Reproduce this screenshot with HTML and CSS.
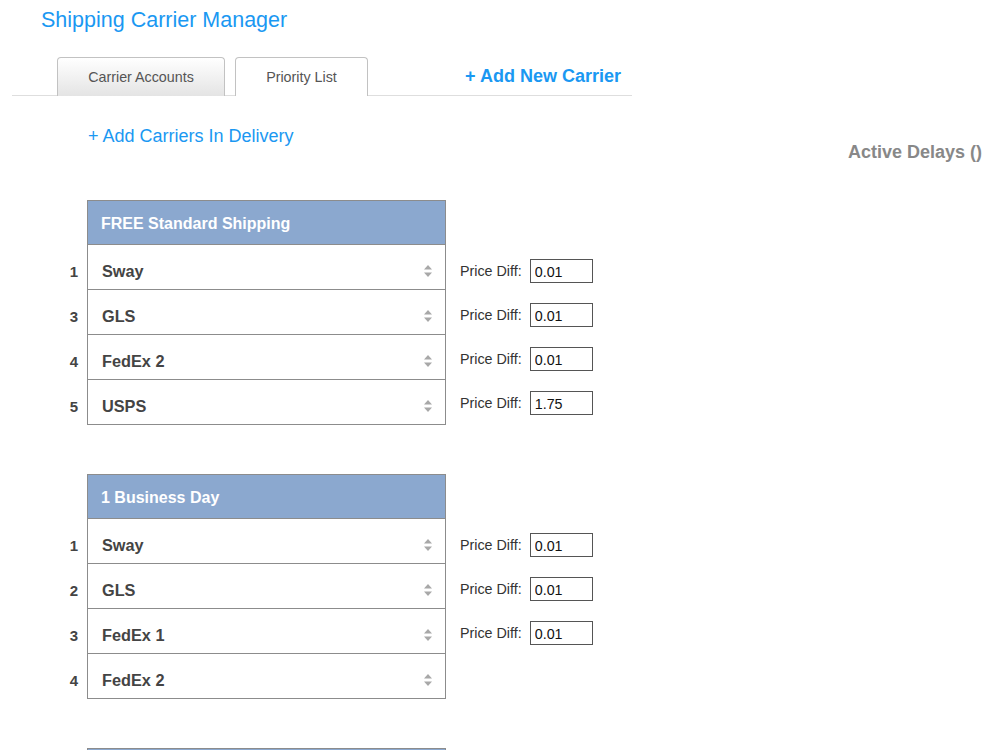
FILE: index.html
```html
<!DOCTYPE html>
<html lang="en">
<head>
    <meta charset="UTF-8">
    <title>Shipping Carrier Manager</title>
    <link rel="stylesheet" href="styles.css">
</head>
<body>
<h1 class="page-title">Shipping Carrier Manager</h1>

<div class="tab-bar">
    <div class="tab">Carrier Accounts</div>
    <div class="tab tab-active">Priority List</div>
    <a class="add-carrier" href="#">+ Add New Carrier</a>
</div>

<div class="content">
    <div class="main-col">
        <a class="add-delivery" href="#">+ Add Carriers In Delivery</a>

        <div class="group">
            <div class="rows">
                <div class="row">
                    <div class="num"></div>
                    <div class="cell cell-head">FREE Standard Shipping</div>
                </div>
                <div class="row">
                    <div class="num">1</div>
                    <div class="cell">Sway <svg class="sort" viewBox="0 0 10 14"><path d="M5 1 L9 5.5 L1 5.5 Z"/><path d="M1 8.5 L9 8.5 L5 13 Z"/></svg></div>
                </div>
                <div class="row">
                    <div class="num">3</div>
                    <div class="cell">GLS <svg class="sort" viewBox="0 0 10 14"><path d="M5 1 L9 5.5 L1 5.5 Z"/><path d="M1 8.5 L9 8.5 L5 13 Z"/></svg></div>
                </div>
                <div class="row">
                    <div class="num">4</div>
                    <div class="cell">FedEx 2 <svg class="sort" viewBox="0 0 10 14"><path d="M5 1 L9 5.5 L1 5.5 Z"/><path d="M1 8.5 L9 8.5 L5 13 Z"/></svg></div>
                </div>
                <div class="row">
                    <div class="num">5</div>
                    <div class="cell">USPS <svg class="sort" viewBox="0 0 10 14"><path d="M5 1 L9 5.5 L1 5.5 Z"/><path d="M1 8.5 L9 8.5 L5 13 Z"/></svg></div>
                </div>
            </div>
            <div class="prices">
                <label class="price">Price Diff: <input type="text" value="0.01"></label>
                <label class="price">Price Diff: <input type="text" value="0.01"></label>
                <label class="price">Price Diff: <input type="text" value="0.01"></label>
                <label class="price">Price Diff: <input type="text" value="1.75"></label>
            </div>
        </div>

        <div class="group">
            <div class="rows">
                <div class="row">
                    <div class="num"></div>
                    <div class="cell cell-head">1 Business Day</div>
                </div>
                <div class="row">
                    <div class="num">1</div>
                    <div class="cell">Sway <svg class="sort" viewBox="0 0 10 14"><path d="M5 1 L9 5.5 L1 5.5 Z"/><path d="M1 8.5 L9 8.5 L5 13 Z"/></svg></div>
                </div>
                <div class="row">
                    <div class="num">2</div>
                    <div class="cell">GLS <svg class="sort" viewBox="0 0 10 14"><path d="M5 1 L9 5.5 L1 5.5 Z"/><path d="M1 8.5 L9 8.5 L5 13 Z"/></svg></div>
                </div>
                <div class="row">
                    <div class="num">3</div>
                    <div class="cell">FedEx 1 <svg class="sort" viewBox="0 0 10 14"><path d="M5 1 L9 5.5 L1 5.5 Z"/><path d="M1 8.5 L9 8.5 L5 13 Z"/></svg></div>
                </div>
                <div class="row">
                    <div class="num">4</div>
                    <div class="cell">FedEx 2 <svg class="sort" viewBox="0 0 10 14"><path d="M5 1 L9 5.5 L1 5.5 Z"/><path d="M1 8.5 L9 8.5 L5 13 Z"/></svg></div>
                </div>
            </div>
            <div class="prices">
                <label class="price">Price Diff: <input type="text" value="0.01"></label>
                <label class="price">Price Diff: <input type="text" value="0.01"></label>
                <label class="price">Price Diff: <input type="text" value="0.01"></label>
            </div>
        </div>

        <div class="group">
            <div class="rows">
                <div class="row">
                    <div class="num"></div>
                    <div class="cell cell-head"></div>
                </div>
            </div>
        </div>
    </div>

    <div class="delays">Active Delays ()</div>
</div>
</body>
</html>
```

FILE: styles.css
```css
body {
    margin: 0;
    font-family: "Liberation Sans", Arial, sans-serif;
    color: #444;
    background: #fff;
}

a {
    text-decoration: none;
    color: #1a98f2;
}

.page-title {
    margin: 0;
    padding: 8px 0 0 41px;
    font-size: 21.5px;
    line-height: 25px;
    font-weight: normal;
    color: #1a98f2;
}

.tab-bar {
    display: flex;
    align-items: flex-end;
    width: 620px;
    height: 39px;
    margin: 24px 0 0 12px;
    padding-left: 45px;
    box-sizing: border-box;
    border-bottom: 1px solid #dedede;
}

.tab {
    height: 39px;
    box-sizing: border-box;
    margin-bottom: -1px;
    margin-right: 10px;
    padding-top: 11px;
    text-align: center;
    font-size: 14.3px;
    line-height: 17px;
    color: #555;
    border: 1px solid #c2c2c2;
    border-bottom: none;
    border-radius: 4px 4px 0 0;
    background: linear-gradient(#ffffff, #e4e4e4);
    width: 168px;
}

.tab-active {
    width: 133px;
    background: #fff;
}

.add-carrier {
    margin-left: auto;
    margin-right: 11px;
    align-self: center;
    font-size: 18px;
    font-weight: bold;
    line-height: 20px;
}

.content {
    display: flex;
    justify-content: space-between;
}

.main-col {
    padding-left: 55px;
}

.add-delivery {
    display: block;
    margin: 30px 0 0 33px;
    font-size: 18px;
    line-height: 20px;
}

.group {
    display: flex;
    margin-top: 49px;
}

.group:first-of-type {
    margin-top: 54px;
}

.row {
    display: flex;
}

.num {
    width: 32px;
    box-sizing: border-box;
    padding: 7px 9px 0 0;
    text-align: right;
    align-self: center;
    font-size: 15px;
    font-weight: bold;
    color: #444;
}

.cell {
    display: flex;
    align-items: center;
    justify-content: space-between;
    width: 359px;
    height: 45px;
    box-sizing: border-box;
    padding: 8px 12px 0 14px;
    border: 1px solid #8c8c8c;
    border-top: none;
    font-size: 16.3px;
    font-weight: bold;
    color: #444;
    background: #fff;
}

.cell-head {
    height: 45px;
    padding: 2px 12px 0 13px;
    border-top: 1px solid #8c8c8c;
    background: #8ba8cf;
    color: #fff;
    font-size: 16px;
}

.sort {
    width: 10px;
    height: 14px;
    fill: #a8a8a8;
}

.prices {
    display: flex;
    flex-direction: column;
    gap: 20px;
    margin-left: 14px;
    padding-top: 59px;
}

.price {
    display: flex;
    align-items: center;
    gap: 8px;
    height: 24px;
    font-size: 14.3px;
    line-height: 17px;
    color: #333;
}

.price input {
    width: 63px;
    height: 24px;
    box-sizing: border-box;
    margin: 0;
    padding: 2px 0 0 4px;
    border: 1px solid #555;
    font-family: "Liberation Sans", Arial, sans-serif;
    font-size: 14.3px;
    color: #111;
}

.delays {
    margin: 46px 18px 0 0;
    font-size: 18px;
    line-height: 20px;
    font-weight: bold;
    color: #888;
}
```
